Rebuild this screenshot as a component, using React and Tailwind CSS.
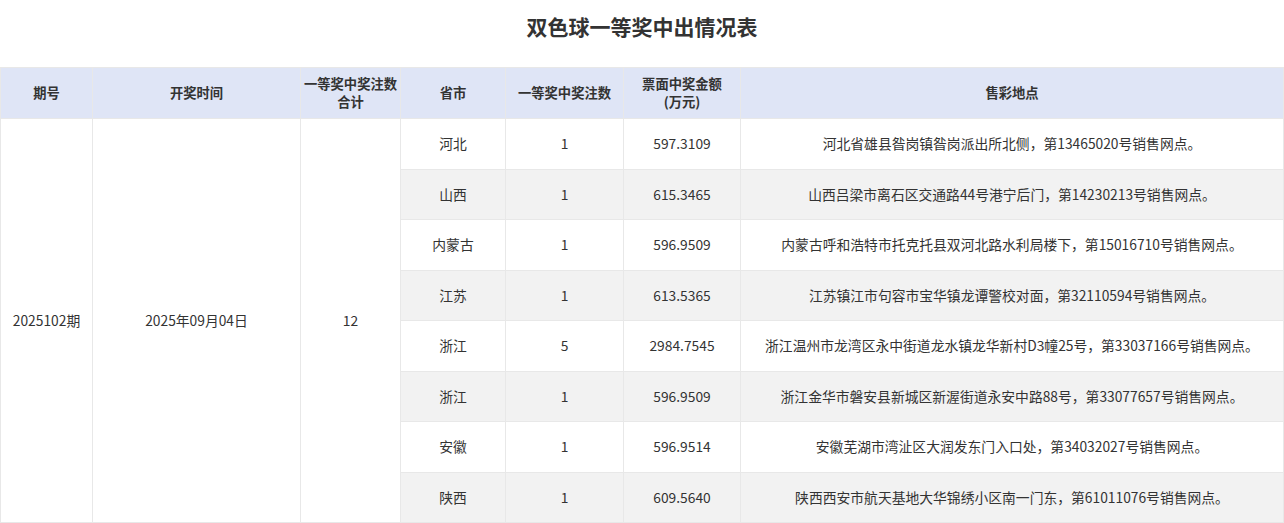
const rows = [
  ["河北","1","597.3109","河北省雄县昝岗镇昝岗派出所北侧，第13465020号销售网点。"],
  ["山西","1","615.3465","山西吕梁市离石区交通路44号港宁后门，第14230213号销售网点。"],
  ["内蒙古","1","596.9509","内蒙古呼和浩特市托克托县双河北路水利局楼下，第15016710号销售网点。"],
  ["江苏","1","613.5365","江苏镇江市句容市宝华镇龙谭警校对面，第32110594号销售网点。"],
  ["浙江","5","2984.7545","浙江温州市龙湾区永中街道龙水镇龙华新村D3幢25号，第33037166号销售网点。"],
  ["浙江","1","596.9509","浙江金华市磐安县新城区新渥街道永安中路88号，第33077657号销售网点。"],
  ["安徽","1","596.9514","安徽芜湖市湾沚区大润发东门入口处，第34032027号销售网点。"],
  ["陕西","1","609.5640","陕西西安市航天基地大华锦绣小区南一门东，第61011076号销售网点。"],
];
export default function App(){
  const td="border border-[#e8e8e8] text-center align-middle";
  return (
    <div className="w-[1284px] h-[523px] bg-white text-[#333] text-[13.8px] overflow-hidden" style={{fontFamily:'"Noto Sans CJK SC","Noto Sans",sans-serif'}}>
      <div className="h-[67px] flex items-center justify-center text-[21px] font-bold pb-[13px]">双色球一等奖中出情况表</div>
      <table className="w-full border-collapse table-fixed">
        <colgroup>
          <col className="w-[92px]"/><col className="w-[208px]"/><col className="w-[100px]"/><col className="w-[105px]"/><col className="w-[118px]"/><col className="w-[117px]"/><col/>
        </colgroup>
        <thead>
          <tr className="h-[51px] bg-[#dfe5f6] font-bold leading-[18px] text-[13.3px]">
            <th className={td}>期号</th><th className={td}>开奖时间</th><th className={td}>一等奖中奖注数<br/>合计</th><th className={td}>省市</th><th className={td}>一等奖中奖注数</th><th className={td}>票面中奖金额<br/>(万元)</th><th className={td}>售彩地点</th>
          </tr>
        </thead>
        <tbody>
          {rows.map((r,i)=>(
            <tr key={i} className="h-[50.5px]">
              {i===0 && <><td rowSpan={8} className={td}>2025102期</td><td rowSpan={8} className={td}>2025年09月04日</td><td rowSpan={8} className={td}>12</td></>}
              {r.map((c,j)=><td key={j} className={`${td} ${i%2===1?"bg-[#f2f2f2]":""}`}>{c}</td>)}
            </tr>
          ))}
        </tbody>
      </table>
    </div>
  );
}
